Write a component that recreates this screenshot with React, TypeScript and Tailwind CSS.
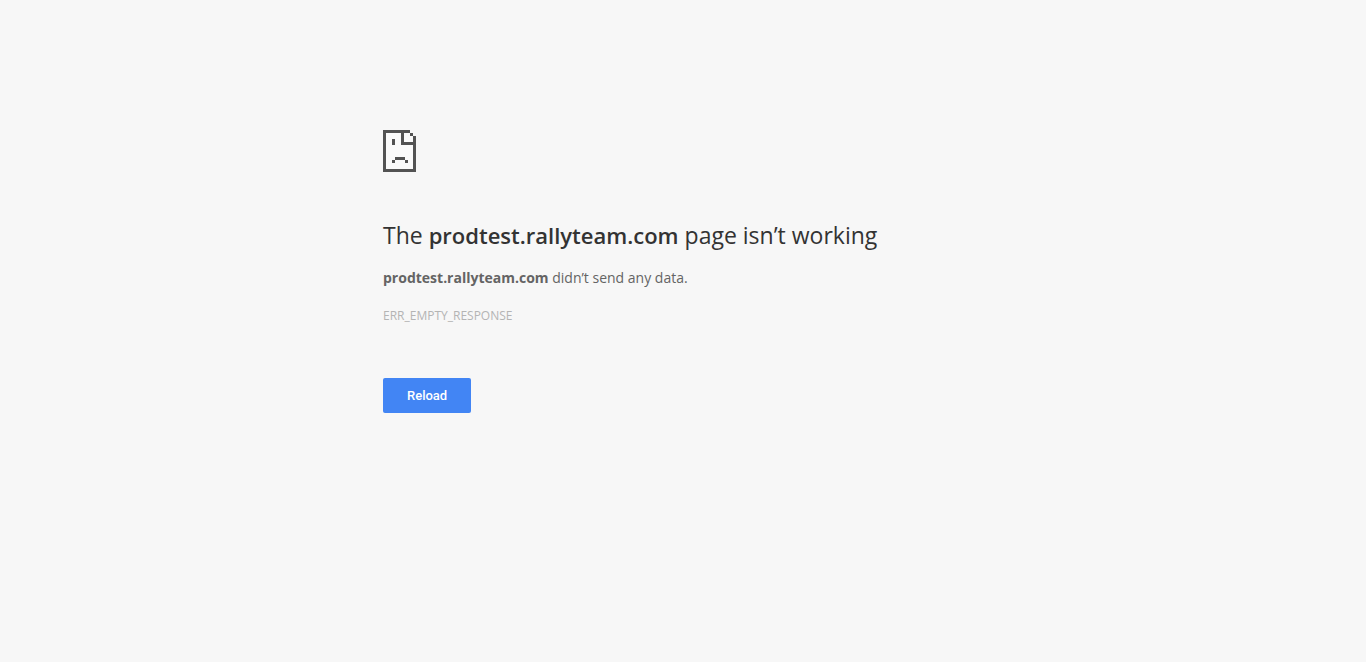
function SadPageIcon() {
  return (
    <svg
      width="33"
      height="42"
      viewBox="0 0 33 42"
      fill="#535353"
      shapeRendering="crispEdges"
      aria-hidden="true"
    >
      <path fill="#fafafa" d="M3 3h24v3h3v33H3z" />
      <path d="M0 0h27v3H3v36h27V6h3v36H0z" />
      <path d="M18 3h3v9h12v3H18z" />
      <path d="M27 3h3v3h-3z" />
      <path d="M9 9h3v6H9z" />
      <path d="M12 27h10v3H12zM9 30h3v3H9zM22 30h3v3h-3z" />
    </svg>
  );
}

export default function App() {
  return (
    <div className="min-h-screen bg-[#f7f7f7] px-6 pt-[130px] font-['Open_Sans','Noto_Sans',sans-serif] text-[#646464]">
      <main className="mx-auto max-w-[600px]">
        <SadPageIcon />
        <h1 className="mt-12 text-[23px] leading-[30px] text-[#333]">
          The <strong className="text-[22px] font-semibold">prodtest.rallyteam.com</strong> page isn’t working
        </h1>
        <p className="mt-4 text-[14px] leading-6">
          <strong className="font-bold">prodtest.rallyteam.com</strong> didn’t send any data.
        </p>
        <p className="mt-4 text-[12px] leading-5 text-[#b4b4b4]">ERR_EMPTY_RESPONSE</p>
        <button
          type="button"
          className="mt-[52px] rounded-xs bg-[#4285f4] px-6 py-2 font-[Roboto,sans-serif] text-[13px] leading-[19px] font-medium text-white"
        >
          Reload
        </button>
      </main>
    </div>
  );
}
